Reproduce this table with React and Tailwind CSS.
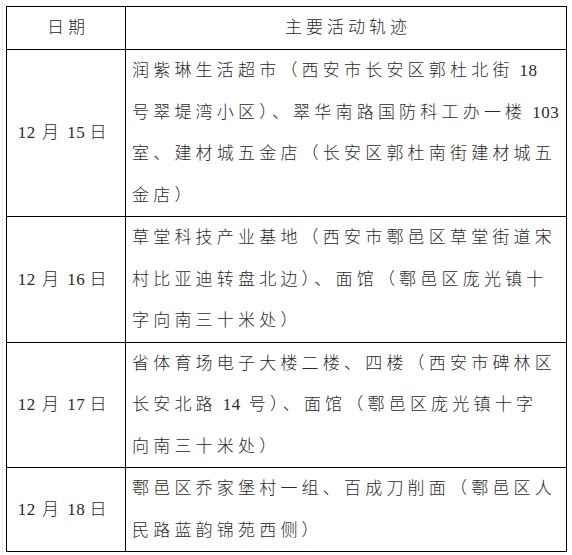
import React from "react";

const FONT = { fontFamily: '"Liberation Serif", "Noto Sans CJK SC", serif' };

const rows = [
  {
    date: "15",
    lines: [
      ["润紫琳生活超市（西安市长安区郭杜北街", "18"],
      ["号翠堤湾小区）、翠华南路国防科工办一楼", "103"],
      ["室、建材城五金店（长安区郭杜南街建材城五"],
      ["金店）"],
    ],
  },
  {
    date: "16",
    lines: [
      ["草堂科技产业基地（西安市鄠邑区草堂街道宋"],
      ["村比亚迪转盘北边）、面馆（鄠邑区庞光镇十"],
      ["字向南三十米处）"],
    ],
  },
  {
    date: "17",
    lines: [
      ["省体育场电子大楼二楼、四楼（西安市碑林区"],
      ["长安北路", "14", "号）、面馆（鄠邑区庞光镇十字"],
      ["向南三十米处）"],
    ],
  },
  {
    date: "18",
    lines: [["鄠邑区乔家堡村一组、百成刀削面（鄠邑区人"], ["民路蓝韵锦苑西侧）"]],
  },
];

function Line({ parts }) {
  return (
    <div className="whitespace-nowrap">
      {parts.map((p, k) =>
        /^\d+$/.test(p) ? (
          <span key={k} className="inline-block tracking-[0.5px] ml-[6px] mr-[8px]">
            {p}
          </span>
        ) : (
          <span key={k} className="tracking-[4.2px]">
            {p}
          </span>
        )
      )}
    </div>
  );
}

export default function App() {
  return (
    <div className="w-[572px] h-[555px] bg-white pl-[2px]" style={FONT}>
      <div className="h-full border-l border-[#ececec] pl-[3px] pt-[6px]">
        <table className="table-fixed border-collapse w-[560px] text-[17px] text-[#2a2a2a] font-light leading-[41.5px]">
          <colgroup>
            <col className="w-[119px]" />
            <col className="w-[441px]" />
          </colgroup>
          <tbody>
            <tr>
              <td className="border border-black h-[43px] text-center tracking-[4px] pl-[4px] p-0">
                日期
              </td>
              <td className="border border-black text-center tracking-[4px] pl-[4px] p-0">
                主要活动轨迹
              </td>
            </tr>
            {rows.map((r, i) => (
              <tr key={i}>
                <td className="border border-black text-center align-middle p-0 whitespace-nowrap pr-[8px]">
                  <span className="tracking-[0.5px]">12</span>
                  <span className="tracking-[2px]"> 月 </span>
                  <span className="tracking-[0.5px]">{r.date}</span>
                  <span> 日</span>
                </td>
                <td className="border border-black pl-[6px] pr-0 py-0 align-top">
                  {r.lines.map((l, j) => (
                    <Line key={j} parts={l} />
                  ))}
                </td>
              </tr>
            ))}
          </tbody>
        </table>
      </div>
    </div>
  );
}
